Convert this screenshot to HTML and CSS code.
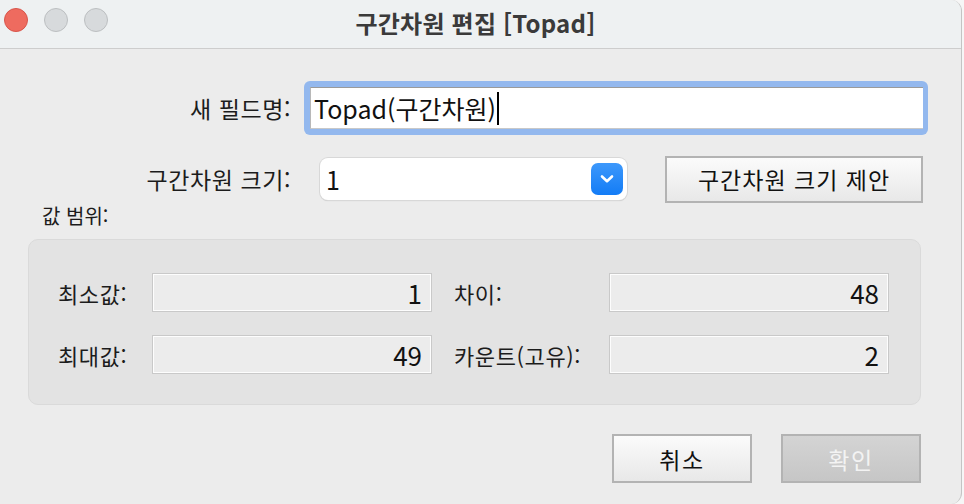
FILE: index.html
```html
<!DOCTYPE html>
<html lang="ko">
<head>
<meta charset="utf-8">
<link rel="stylesheet" href="styles.css">
</head>
<body>
<div class="window">
  <div class="titlebar">
    <div class="lights">
      <span class="light red"></span>
      <span class="light gray"></span>
      <span class="light gray"></span>
    </div>
    <div class="title">구간차원 편집 [Topad]</div>
  </div>
  <div class="content">
    <div class="row row-name">
      <label class="label">새 필드명:</label>
      <div class="focus-ring">
        <div class="text-input">Topad(구간차원)<span class="caret"></span></div>
      </div>
    </div>
    <div class="row row-size">
      <label class="label">구간차원 크기:</label>
      <div class="select">
        <span class="select-value">1</span>
        <span class="select-btn">
          <svg width="16" height="10" viewBox="0 0 16 10"><path d="M3 2.5 L8 7.2 L13 2.5" fill="none" stroke="#fff" stroke-width="2.6" stroke-linecap="round" stroke-linejoin="round"/></svg>
        </span>
      </div>
      <button class="btn btn-suggest">구간차원 크기 제안</button>
    </div>
    <div class="range-label">값 범위:</div>
    <div class="panel">
      <div class="grid">
        <span class="glabel">최소값:</span>
        <span class="field">1</span>
        <span class="glabel glabel2">차이:</span>
        <span class="field">48</span>
        <span class="glabel">최대값:</span>
        <span class="field">49</span>
        <span class="glabel glabel2">카운트(고유):</span>
        <span class="field">2</span>
      </div>
    </div>
    <div class="actions">
      <button class="btn btn-cancel">취소</button>
      <button class="btn btn-ok" disabled>확인</button>
    </div>
  </div>
</div>
</body>
</html>
```
FILE: styles.css
```css
* { box-sizing: border-box; }
html, body { margin: 0; padding: 0; }
body {
  width: 964px;
  height: 504px;
  overflow: hidden;
  background: #f6f6f6;
  font-family: "Noto Sans CJK KR", "Noto Sans", sans-serif;
  color: #1a1a1a;
}
.window {
  width: 962px;
  height: 504px;
  background: #ececec;
  border-right: 1px solid #c4c4c4;
  border-top-right-radius: 11px;
  border-bottom-right-radius: 11px;
  overflow: hidden;
  display: flex;
  flex-direction: column;
}
.titlebar {
  height: 49px;
  flex: none;
  background: #eef1f2;
  border-bottom: 1px solid #cdcdcd;
  display: flex;
  align-items: center;
  justify-content: center;
  position: relative;
}
.lights {
  position: absolute;
  left: 4px;
  top: 8px;
  display: flex;
  gap: 16px;
}
.light {
  width: 24px;
  height: 24px;
  border-radius: 50%;
  display: block;
}
.light.red { background: #ee6b5f; border: 1px solid #d8554b; }
.light.gray { background: #d7dadc; border: 1px solid #bcbfc1; }
.title {
  font-size: 24px;
  font-weight: 700;
  color: #3a3a3a;
  margin-top: -4px;
  margin-left: -10px;
  letter-spacing: 0.2px;
}
.content {
  display: flex;
  flex-direction: column;
  flex: 1;
}
.row {
  display: flex;
  align-items: center;
}
.label {
  width: 291px;
  text-align: right;
  font-size: 23px;
  letter-spacing: 0.6px;
  color: #1c1c1c;
}
.row-name { margin-top: 32px; height: 54px; }
.focus-ring {
  margin-left: 13px;
  width: 624px;
  height: 54px;
  border-radius: 6px;
  background: #93b8ee;
  padding: 6px 5px 6px 6px;
}
.text-input {
  height: 100%;
  background: #fff;
  border-top: 1px solid #9a9a9a;
  border-left: 1px solid #b8b8b8;
  border-bottom: 1px solid #c8c8c8;
  font-size: 25px;
  line-height: 40px;
  padding-left: 3px;
  color: #111;
  display: flex;
  align-items: center;
}
.caret {
  display: inline-block;
  width: 2px;
  height: 33px;
  background: #000;
  margin-left: 1px;
}
.row-size { margin-top: 20px; height: 48px; }
.select {
  margin-left: 29px;
  width: 307px;
  height: 42px;
  background: #fff;
  border-radius: 8px;
  box-shadow: 0 0 0 1px #d8d8d8, 0 1px 1px rgba(0,0,0,0.18);
  display: flex;
  align-items: center;
  justify-content: space-between;
  padding: 0 4px 0 6px;
}
.select-value { font-size: 25px; color: #111; }
.select-btn {
  width: 32px;
  height: 32px;
  border-radius: 7px;
  background: linear-gradient(#3d98fb, #137cf6);
  display: flex;
  align-items: center;
  justify-content: center;
}
.btn {
  font-family: "Noto Sans CJK KR", "Noto Sans", sans-serif;
  font-size: 23px;
  letter-spacing: 1px;
  color: #111;
  border: 2px solid #b3b3b3;
  background: linear-gradient(#fbfbfb, #e8e8e8);
  padding: 0;
  border-radius: 0;
}
.btn-suggest {
  margin-left: 38px;
  width: 258px;
  height: 47px;
}
.range-label {
  font-size: 20px;
  padding-left: 42px;
  height: 36px;
  line-height: 26px;
  color: #1c1c1c;
}
.panel {
  margin-left: 28px;
  width: 893px;
  height: 166px;
  background: #e3e3e3;
  border: 1px solid #dadada;
  border-radius: 10px;
  padding: 33px 0 0 29px;
}
.grid {
  display: grid;
  grid-template-columns: 94px 280px 177px 280px;
  grid-auto-rows: 39px;
  row-gap: 23px;
  align-items: center;
}
.glabel { font-size: 22px; letter-spacing: 0.6px; color: #1c1c1c; white-space: nowrap; }
.glabel2 { padding-left: 22px; }
.field {
  height: 39px;
  background: #ececec;
  border: 1px solid #c9c9c9;
  box-shadow: inset 0 0 0 1px #fdfdfd;
  text-align: right;
  padding-right: 9px;
  font-size: 26px;
  line-height: 37px;
  color: #111;
}
.actions {
  margin-top: 29px;
  display: flex;
  justify-content: flex-end;
  gap: 29px;
  padding-right: 40px;
}
.btn-cancel { width: 140px; height: 49px; letter-spacing: 1.5px; }
.btn-ok {
  width: 140px;
  height: 49px;
  letter-spacing: 1.5px;
  background: linear-gradient(#d4d4d4, #c6c6c6);
  color: #f3f3f3;
}
```
